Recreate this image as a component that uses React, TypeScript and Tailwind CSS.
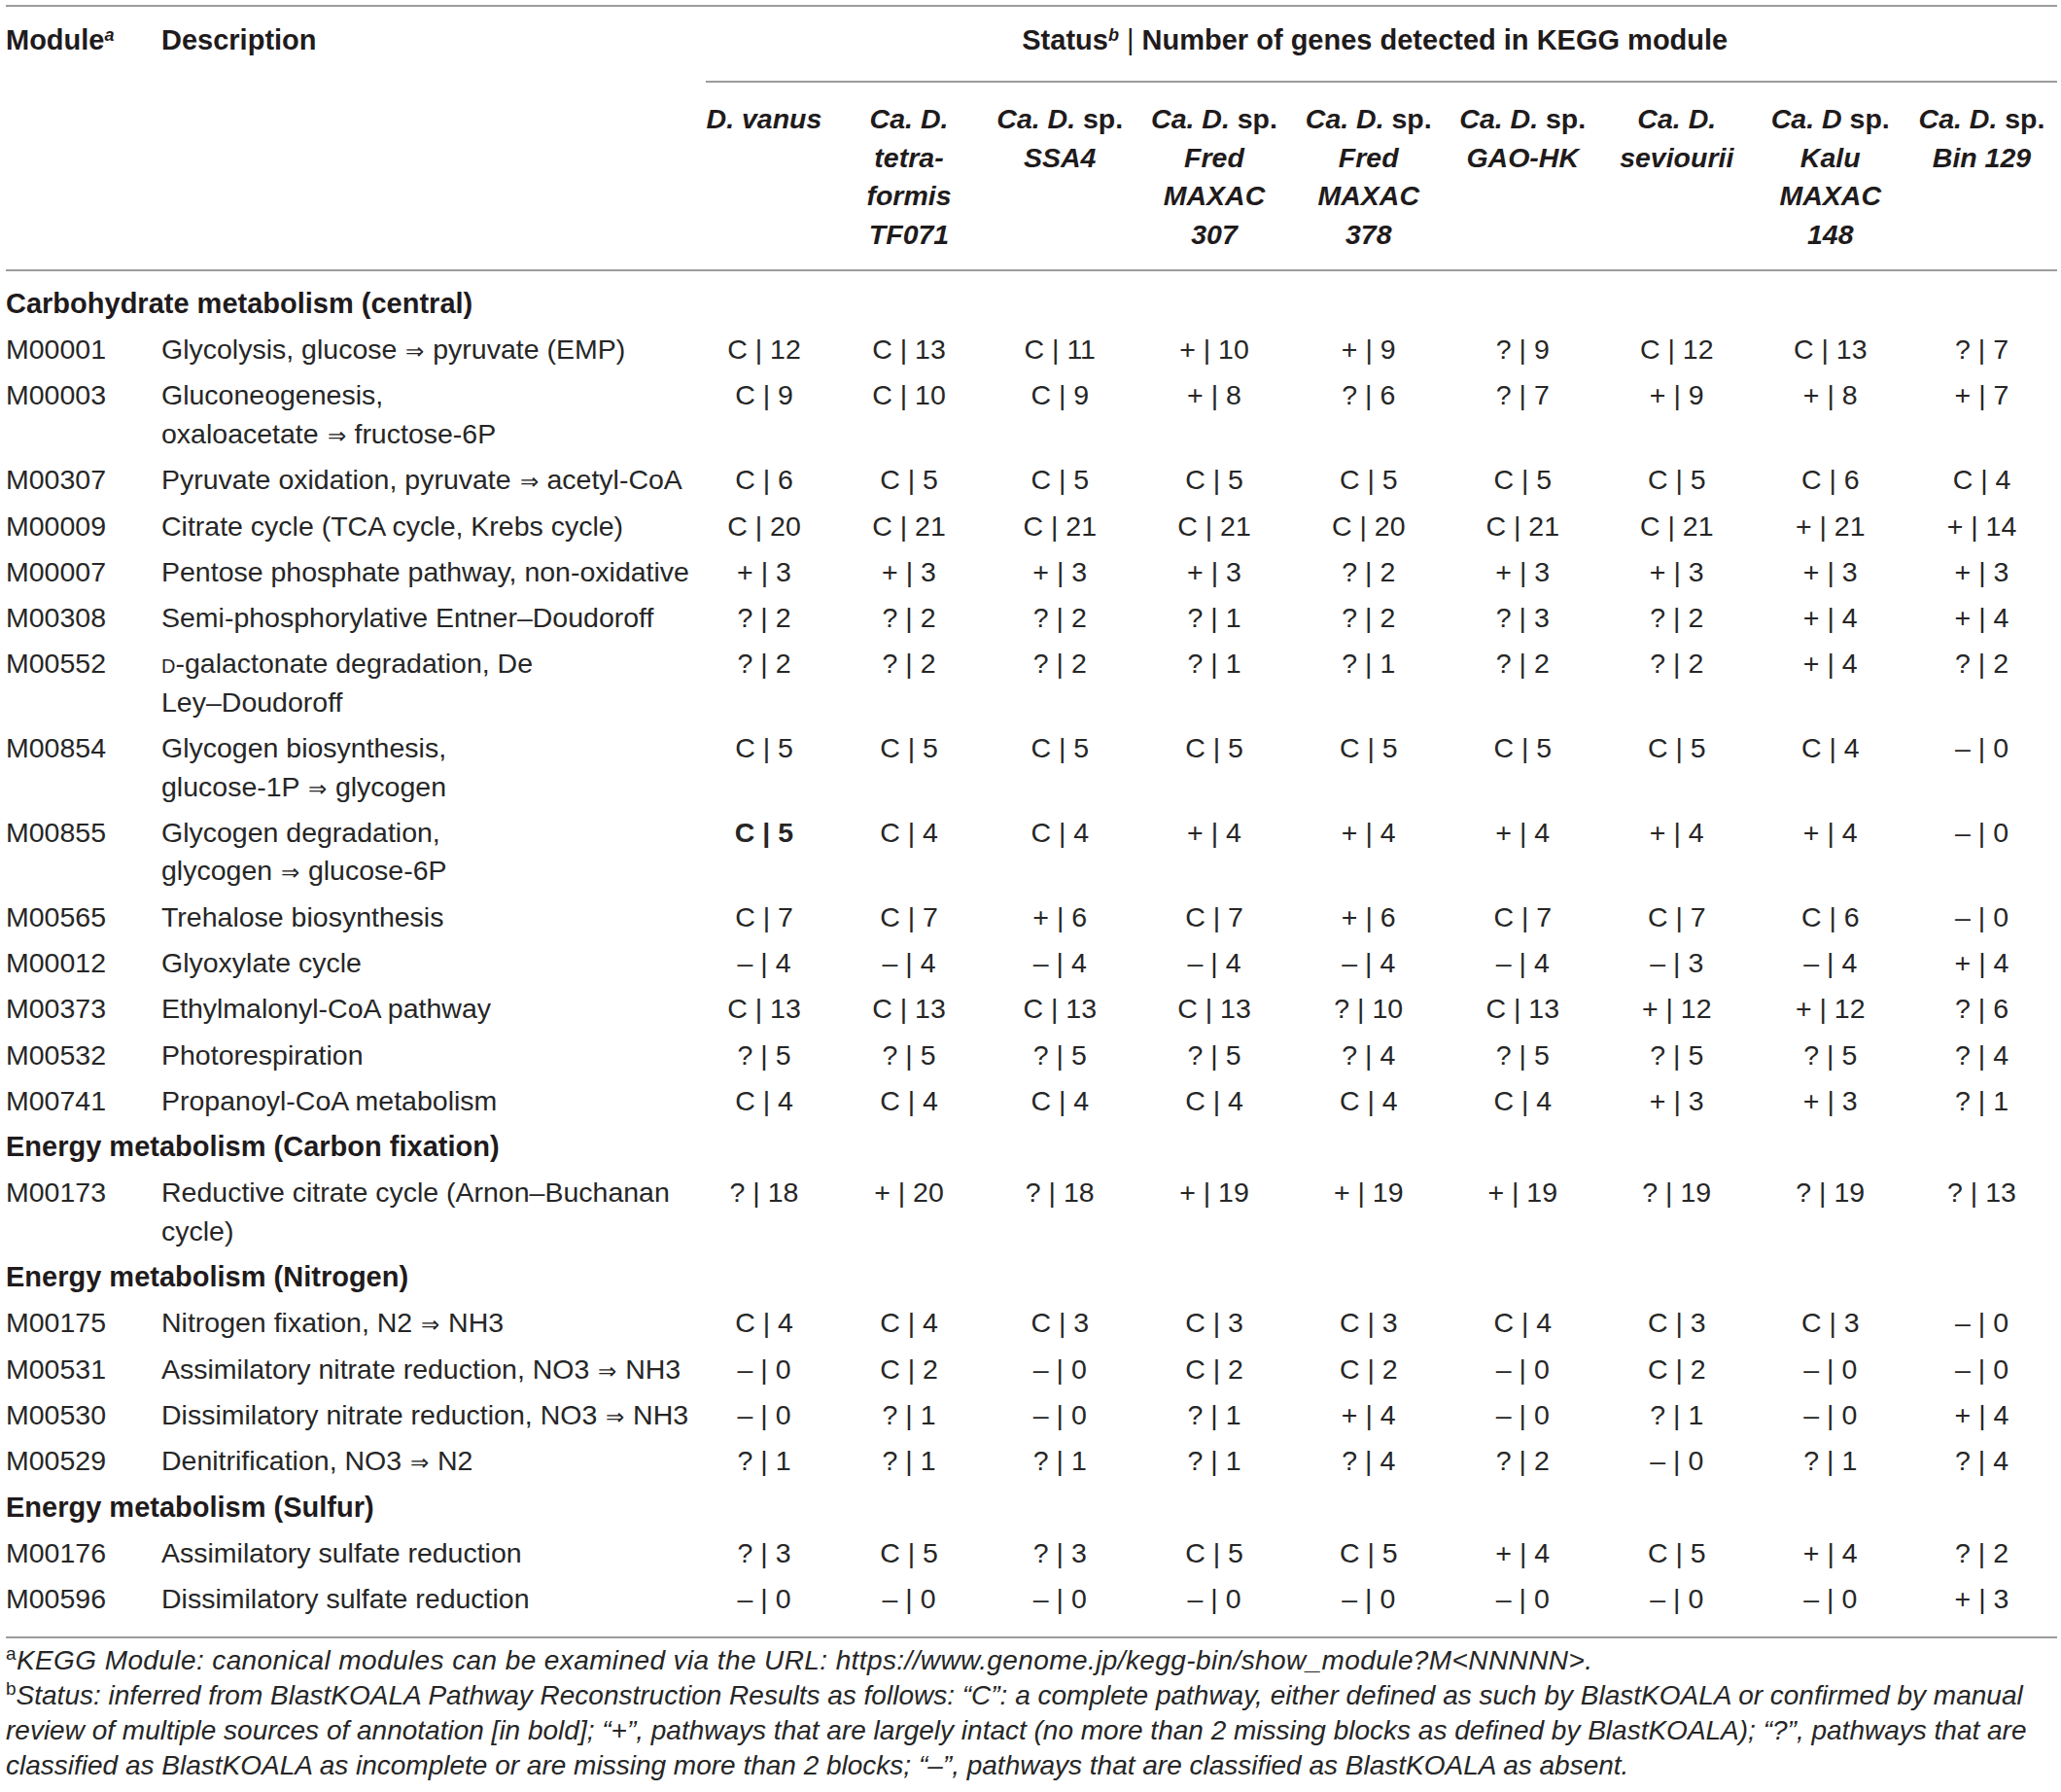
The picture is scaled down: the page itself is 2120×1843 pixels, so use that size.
const GRID =
  "grid grid-cols-[160px_547px_146px_152px_158.5px_159px_158.5px_158.5px_158.5px_157.5px_154px]";
const DATA_GRID =
  "grid grid-cols-[146px_152px_158.5px_159px_158.5px_158.5px_158.5px_157.5px_154px]";

type Row =
  | { section: string }
  | { id: string; desc: React.ReactNode[]; values: string[]; bold?: number[] };

const arrow = <span className="px-[1px] text-[23px] leading-none">⇒</span>;

const rows: Row[] = [
  { section: "Carbohydrate metabolism (central)" },
  {
    id: "M00001",
    desc: [<>Glycolysis, glucose {arrow} pyruvate (EMP)</>],
    values: ["C|12", "C|13", "C|11", "+|10", "+|9", "?|9", "C|12", "C|13", "?|7"],
  },
  {
    id: "M00003",
    desc: ["Gluconeogenesis,", <>oxaloacetate {arrow} fructose-6P</>],
    values: ["C|9", "C|10", "C|9", "+|8", "?|6", "?|7", "+|9", "+|8", "+|7"],
  },
  {
    id: "M00307",
    desc: [<>Pyruvate oxidation, pyruvate {arrow} acetyl-CoA</>],
    values: ["C|6", "C|5", "C|5", "C|5", "C|5", "C|5", "C|5", "C|6", "C|4"],
  },
  {
    id: "M00009",
    desc: ["Citrate cycle (TCA cycle, Krebs cycle)"],
    values: ["C|20", "C|21", "C|21", "C|21", "C|20", "C|21", "C|21", "+|21", "+|14"],
  },
  {
    id: "M00007",
    desc: ["Pentose phosphate pathway, non-oxidative"],
    values: ["+|3", "+|3", "+|3", "+|3", "?|2", "+|3", "+|3", "+|3", "+|3"],
  },
  {
    id: "M00308",
    desc: ["Semi-phosphorylative Entner–Doudoroff"],
    values: ["?|2", "?|2", "?|2", "?|1", "?|2", "?|3", "?|2", "+|4", "+|4"],
  },
  {
    id: "M00552",
    desc: [
      <>
        <span className="text-[20px] leading-none">D</span>-galactonate degradation, De
      </>,
      "Ley–Doudoroff",
    ],
    values: ["?|2", "?|2", "?|2", "?|1", "?|1", "?|2", "?|2", "+|4", "?|2"],
  },
  {
    id: "M00854",
    desc: ["Glycogen biosynthesis,", <>glucose-1P {arrow} glycogen</>],
    values: ["C|5", "C|5", "C|5", "C|5", "C|5", "C|5", "C|5", "C|4", "–|0"],
  },
  {
    id: "M00855",
    desc: ["Glycogen degradation,", <>glycogen {arrow} glucose-6P</>],
    values: ["C|5", "C|4", "C|4", "+|4", "+|4", "+|4", "+|4", "+|4", "–|0"],
    bold: [0],
  },
  {
    id: "M00565",
    desc: ["Trehalose biosynthesis"],
    values: ["C|7", "C|7", "+|6", "C|7", "+|6", "C|7", "C|7", "C|6", "–|0"],
  },
  {
    id: "M00012",
    desc: ["Glyoxylate cycle"],
    values: ["–|4", "–|4", "–|4", "–|4", "–|4", "–|4", "–|3", "–|4", "+|4"],
  },
  {
    id: "M00373",
    desc: ["Ethylmalonyl-CoA pathway"],
    values: ["C|13", "C|13", "C|13", "C|13", "?|10", "C|13", "+|12", "+|12", "?|6"],
  },
  {
    id: "M00532",
    desc: ["Photorespiration"],
    values: ["?|5", "?|5", "?|5", "?|5", "?|4", "?|5", "?|5", "?|5", "?|4"],
  },
  {
    id: "M00741",
    desc: ["Propanoyl-CoA metabolism"],
    values: ["C|4", "C|4", "C|4", "C|4", "C|4", "C|4", "+|3", "+|3", "?|1"],
  },
  { section: "Energy metabolism (Carbon fixation)" },
  {
    id: "M00173",
    desc: ["Reductive citrate cycle (Arnon–Buchanan", "cycle)"],
    values: ["?|18", "+|20", "?|18", "+|19", "+|19", "+|19", "?|19", "?|19", "?|13"],
  },
  { section: "Energy metabolism (Nitrogen)" },
  {
    id: "M00175",
    desc: [<>Nitrogen fixation, N2 {arrow} NH3</>],
    values: ["C|4", "C|4", "C|3", "C|3", "C|3", "C|4", "C|3", "C|3", "–|0"],
  },
  {
    id: "M00531",
    desc: [<>Assimilatory nitrate reduction, NO3 {arrow} NH3</>],
    values: ["–|0", "C|2", "–|0", "C|2", "C|2", "–|0", "C|2", "–|0", "–|0"],
  },
  {
    id: "M00530",
    desc: [<>Dissimilatory nitrate reduction, NO3 {arrow} NH3</>],
    values: ["–|0", "?|1", "–|0", "?|1", "+|4", "–|0", "?|1", "–|0", "+|4"],
  },
  {
    id: "M00529",
    desc: [<>Denitrification, NO3 {arrow} N2</>],
    values: ["?|1", "?|1", "?|1", "?|1", "?|4", "?|2", "–|0", "?|1", "?|4"],
  },
  { section: "Energy metabolism (Sulfur)" },
  {
    id: "M00176",
    desc: ["Assimilatory sulfate reduction"],
    values: ["?|3", "C|5", "?|3", "C|5", "C|5", "+|4", "C|5", "+|4", "?|2"],
  },
  {
    id: "M00596",
    desc: ["Dissimilatory sulfate reduction"],
    values: ["–|0", "–|0", "–|0", "–|0", "–|0", "–|0", "–|0", "–|0", "+|3"],
  },
];

// species names, one entry per printed line; [text, italic]
const species: [string, boolean][][][] = [
  [[["D. vanus", true]]],
  [[["Ca. D.", true]], [["tetra-", true]], [["formis", true]], [["TF071", true]]],
  [[["Ca. D.", true], [" sp.", false]], [["SSA4", true]]],
  [[["Ca. D.", true], [" sp.", false]], [["Fred", true]], [["MAXAC", true]], [["307", true]]],
  [[["Ca. D.", true], [" sp.", false]], [["Fred", true]], [["MAXAC", true]], [["378", true]]],
  [[["Ca. D.", true], [" sp.", false]], [["GAO-HK", true]]],
  [[["Ca. D.", true]], [["seviourii", true]]],
  [[["Ca. D", true], [" sp.", false]], [["Kalu", true]], [["MAXAC", true]], [["148", true]]],
  [[["Ca. D.", true], [" sp.", false]], [["Bin 129", true]]],
];

function Rule({ className = "" }: { className?: string }) {
  return <div className={`h-[2px] bg-[#9c9c9c] ${className}`} />;
}

function Value({ v, bold }: { v: string; bold?: boolean }) {
  const [status, count] = v.split("|");
  return (
    <div className={`whitespace-nowrap text-center ${bold ? "font-bold" : ""}`}>
      {status} | {count}
    </div>
  );
}

export default function App() {
  return (
    <div className="h-[1843px] w-[2120px] overflow-hidden bg-white pl-[6px] pt-[5px] font-['Liberation_Sans',Arial,sans-serif] text-[28.5px] leading-[39.5px] text-[#262626]">
      <div className="w-[2110px]">
        <Rule />

        {/* header */}
        <div className={`${GRID} pt-[15px] text-[29px] font-bold text-[#1f1b1c]`}>
          <div>
            Module<sup className="text-[18px] italic">a</sup>
          </div>
          <div>Description</div>
          <div className="col-span-9">
            <div className="text-center">
              Status<sup className="text-[18px] italic">b</sup>{" "}
              <span className="font-normal">|</span> Number of genes detected in KEGG module
            </div>
            <Rule className="ml-[13px] mt-[21.5px]" />
            <div className={`${DATA_GRID} mt-[18px] text-[28.5px]`}>
              {species.map((lines, i) => (
                <div className="text-center" key={i}>
                  {lines.map((parts, j) => (
                    <div className="whitespace-nowrap" key={j}>
                      {parts.map(([t, it], k) => (
                        <span className={it ? "italic" : ""} key={k}>
                          {t}
                        </span>
                      ))}
                    </div>
                  ))}
                </div>
              ))}
            </div>
          </div>
        </div>

        <Rule className="mt-[16px]" />

        {/* body */}
        <div className="pt-[10px]">
          {rows.map((row, i) =>
            "section" in row ? (
              <div className="py-[3.9px] text-[29px] font-bold text-[#1f1b1c]" key={i}>
                {row.section}
              </div>
            ) : (
              <div className={`${GRID} py-[3.9px]`} key={i}>
                <div>{row.id}</div>
                <div className="whitespace-nowrap">
                  {row.desc.map((line, j) => (
                    <div key={j}>{line}</div>
                  ))}
                </div>
                {row.values.map((v, j) => (
                  <Value bold={row.bold?.includes(j)} key={j} v={v} />
                ))}
              </div>
            ),
          )}
        </div>

        <Rule className="mt-[14px]" />

        {/* footnotes */}
        <div className="mt-[5px] whitespace-nowrap text-[28px] italic leading-[36px]">
          <div className="tracking-[0.4px]">
            <sup className="text-[19px] not-italic">a</sup>KEGG Module: canonical modules can be examined via the URL:
            https://www.genome.jp/kegg-bin/show_module?M&lt;NNNNN&gt;.
          </div>
          <div>
            <sup className="text-[19px] not-italic">b</sup>Status: inferred from BlastKOALA Pathway Reconstruction Results
            as follows: “C”: a complete pathway, either defined as such by BlastKOALA or confirmed by manual
          </div>
          <div>
            review of multiple sources of annotation [in bold]; “+”, pathways that are largely intact (no more than 2
            missing blocks as defined by BlastKOALA); “?”, pathways that are
          </div>
          <div>
            classified as BlastKOALA as incomplete or are missing more than 2 blocks; “–”, pathways that are classified
            as BlastKOALA as absent.
          </div>
        </div>
      </div>
    </div>
  );
}
